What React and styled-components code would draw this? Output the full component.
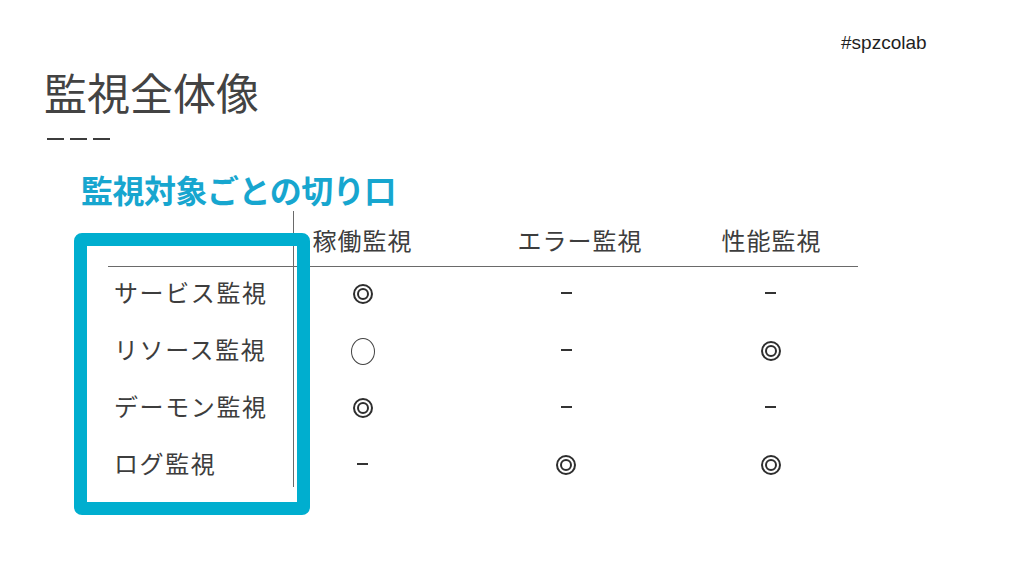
import styled, { createGlobalStyle } from "styled-components";

const GlobalStyle = createGlobalStyle`
  html, body {
    margin: 0;
    padding: 0;
    background: #ffffff;
  }
  body {
    font-family: "Noto Sans CJK JP", "Noto Sans", sans-serif;
  }
`;

const columns = ["稼働監視", "エラー監視", "性能監視"];
const headShift = [0, 34, -10];
const markShift = [0, 6, -12];

const rows = [
  { label: "サービス監視", marks: ["◎", "-", "-"] },
  { label: "リソース監視", marks: ["◯", "-", "◎"] },
  { label: "デーモン監視", marks: ["◎", "-", "-"] },
  { label: "ログ監視", marks: ["-", "◎", "◎"] },
];

const App = () => {
  return (
    <>
      <GlobalStyle />
      <Slide>
        <TopBar>
          <Title>監視全体像</Title>
          <Tag>#spzcolab</Tag>
        </TopBar>
        <Dashes>
          <Dash />
          <Dash />
          <Dash />
        </Dashes>
        <Subtitle>監視対象ごとの切り口</Subtitle>

        <TableArea>
          <Table>
            <HeadCell />
            {columns.map((c, i) => (
              <HeadCell key={c} $shift={headShift[i]} $divider={i === 0}>
                {c}
              </HeadCell>
            ))}
            {rows.map((r, ri) => (
              <Row key={r.label} $last={ri === rows.length - 1}>
                <LabelCell>{r.label}</LabelCell>
                {r.marks.map((m, mi) => (
                  <MarkCell key={mi} $divider={mi === 0} $shift={markShift[mi]}>
                    {m === "-" ? <Bar /> : m === "◯" ? <Circle /> : <Double />}
                  </MarkCell>
                ))}
              </Row>
            ))}
          </Table>
          <Highlight />
        </TableArea>
      </Slide>
    </>
  );
};

export default App;

const Slide = styled.main`
  position: relative;
  width: 1024px;
  height: 576px;
  overflow: hidden;
  background: #ffffff;
  box-sizing: border-box;
  padding: 0 0 0 44px;
`;

const TopBar = styled.header`
  display: flex;
  justify-content: space-between;
  align-items: flex-start;
  padding-top: 62px;
  height: 66px;
`;

const Title = styled.h1`
  margin: 0;
  font-family: "Noto Sans CJK JP", sans-serif;
  font-weight: 400;
  font-size: 43px;
  line-height: 58px;
  color: #434343;
`;

const Tag = styled.span`
  position: absolute;
  top: 32px;
  left: 841px;
  font-family: "Liberation Sans", Arial, sans-serif;
  font-size: 19px;
  color: #1f1f1f;
`;

const Dashes = styled.div`
  display: flex;
  gap: 6px;
  margin: 10px 0 0 3px;
  height: 3px;
`;

const Dash = styled.span`
  display: block;
  width: 17px;
  height: 2px;
  background: #3c3c3c;
`;

const Subtitle = styled.h2`
  margin: 28px 0 0 37px;
  font-family: "Noto Sans CJK JP", sans-serif;
  font-weight: 700;
  font-size: 32px;
  line-height: 40px;
  letter-spacing: -0.5px;
  color: #17a6cf;
`;

const TableArea = styled.section`
  position: relative;
  margin: 2px 0 0 64px;
  width: 750px;
`;

const Table = styled.div`
  display: grid;
  grid-template-columns: 185px 138px 264px 163px;
  font-family: "Noto Sans CJK JP", sans-serif;
  font-size: 24px;
  color: #3d3d3d;
`;

const HeadCell = styled.div`
  height: 56px;
  box-sizing: border-box;
  border-bottom: 1.5px solid #6a6a6a;
  border-left: ${(p) => (p.$divider ? "1.5px solid #6a6a6a" : "none")};
  display: flex;
  align-items: center;
  justify-content: center;
  padding-left: ${(p) => Math.max(p.$shift || 0, 0)}px;
  padding-right: ${(p) => Math.max(-(p.$shift || 0), 0)}px;
  padding-top: 2px;
  white-space: nowrap;
  letter-spacing: 1px;
`;

const Row = styled.div`
  display: contents;

  & > * {
    height: ${(p) => (p.$last ? 49 : 57)}px;
  }
`;

const LabelCell = styled.div`
  box-sizing: border-box;
  padding: 11px 0 0 6px;
  line-height: 28px;
  letter-spacing: 1.6px;
  white-space: nowrap;
`;

const MarkCell = styled.div`
  box-sizing: border-box;
  display: flex;
  justify-content: center;
  align-items: flex-start;
  padding-top: 15px;
  padding-left: ${(p) => Math.max(p.$shift || 0, 0)}px;
  padding-right: ${(p) => Math.max(-(p.$shift || 0), 0)}px;
  border-left: ${(p) => (p.$divider ? "1.5px solid #6a6a6a" : "none")};
`;

const Double = styled.span`
  position: relative;
  display: block;
  width: 20px;
  height: 20px;
  margin-top: 2px;
  box-sizing: border-box;
  border: 2px solid #2e2e2e;
  border-radius: 50%;

  &::after {
    content: "";
    position: absolute;
    left: 2px;
    top: 2px;
    width: 12px;
    height: 12px;
    box-sizing: border-box;
    border: 2px solid #2e2e2e;
    border-radius: 50%;
  }
`;

const Circle = styled.span`
  display: block;
  width: 24px;
  height: 27px;
  margin-top: -1px;
  box-sizing: border-box;
  border: 1.2px solid #444;
  border-radius: 50%;
`;

const Bar = styled.span`
  display: block;
  width: 11px;
  height: 2px;
  margin-top: 10px;
  background: #333;
`;

const Highlight = styled.div`
  position: absolute;
  left: -34px;
  top: 22px;
  width: 236px;
  height: 282px;
  box-sizing: border-box;
  border: 13px solid #00aecf;
  border-radius: 8px;
`;
